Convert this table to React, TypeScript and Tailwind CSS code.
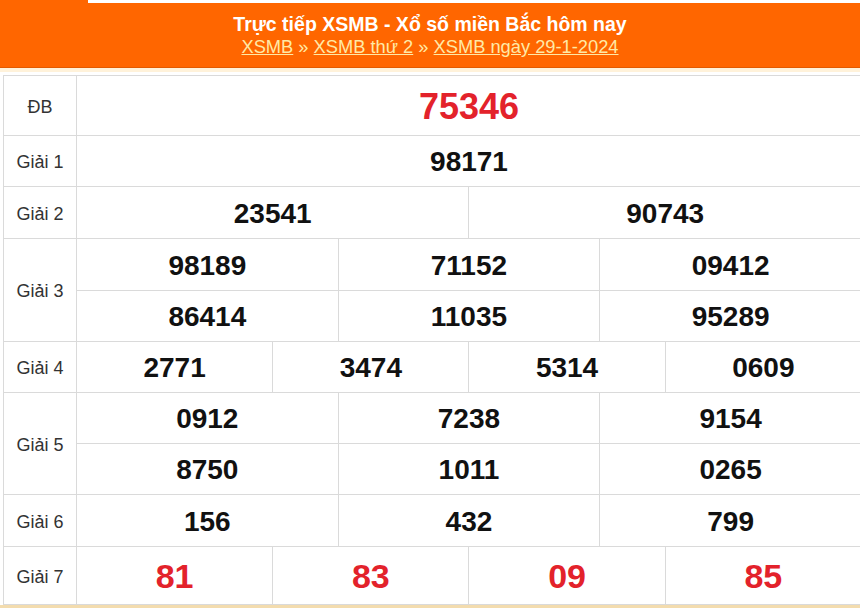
import React from "react"

type Row = { label: string; lines: string[][]; h: number[]; red?: boolean; big?: boolean }

const rows: Row[] = [
  { label: "ĐB", lines: [["75346"]], h: [60], red: true, big: true },
  { label: "Giải 1", lines: [["98171"]], h: [51] },
  { label: "Giải 2", lines: [["23541", "90743"]], h: [52] },
  { label: "Giải 3", lines: [["98189", "71152", "09412"], ["86414", "11035", "95289"]], h: [52, 51] },
  { label: "Giải 4", lines: [["2771", "3474", "5314", "0609"]], h: [51] },
  { label: "Giải 5", lines: [["0912", "7238", "9154"], ["8750", "1011", "0265"]], h: [51, 51] },
  { label: "Giải 6", lines: [["156", "432", "799"]], h: [52] },
  { label: "Giải 7", lines: [["81", "83", "09", "85"]], h: [58], red: true },
]

const span = (n: number) => 12 / n

export default function App() {
  return (
    <div className="w-[860px] h-[608px] overflow-hidden bg-white font-['Liberation_Sans',Arial,sans-serif]">
      <div className="bg-[#ff6600] h-[68px] border-b border-[#e25a00]">
        <div className="ml-[88px] h-[3px] bg-white" />
        <div className="text-center pt-[9px] text-white font-bold text-[19.5px] leading-[24px]">
          Trực tiếp XSMB - Xổ số miền Bắc hôm nay
        </div>
        <div className="text-center text-[#ffe9a6] text-[18.3px] leading-[22px]">
          <a className="underline">XSMB</a> » <a className="underline">XSMB thứ 2</a> »{" "}
          <a className="underline">XSMB ngày 29-1-2024</a>
        </div>
      </div>
      <div className="h-[4px] bg-[#fff2da]" />
      <div className="h-[3px]" />
      <table className="ml-[3px] w-[859px] table-fixed border-collapse">
        <colgroup>
          <col className="w-[73px]" />
          {Array.from({ length: 12 }).map((_, i) => (
            <col key={i} />
          ))}
        </colgroup>
        <tbody>
          {rows.map((r) =>
            r.lines.map((line, li) => (
              <tr key={r.label + li} style={{ height: r.h[li] }}>
                {li === 0 && (
                  <td
                    rowSpan={r.lines.length}
                    className="border border-[#dadada] text-center text-[18px] text-[#333] pt-[3px]"
                  >
                    {r.label}
                  </td>
                )}
                {line.map((n, i) => (
                  <td
                    key={i}
                    colSpan={span(line.length)}
                    className={`border border-[#dadada] text-center font-bold pt-[2px] ${
                      r.red ? "text-[#e3222b]" : "text-[#111]"
                    } ${r.big ? "text-[36px]" : r.red ? "text-[34px]" : "text-[28px]"}`}
                  >
                    {n}
                  </td>
                ))}
              </tr>
            ))
          )}
        </tbody>
      </table>
      <div className="h-[3px] bg-[#f3dcae]" />
    </div>
  )
}
